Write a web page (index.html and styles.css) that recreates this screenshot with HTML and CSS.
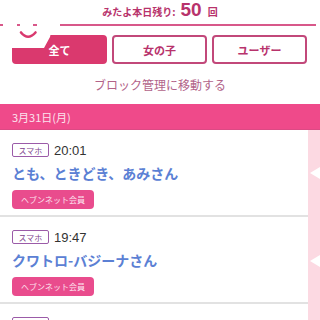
FILE: index.html
```html
<!DOCTYPE html>
<html lang="ja">
<head>
<meta charset="utf-8">
<link rel="stylesheet" href="styles.css">
</head>
<body>
<div class="page">
  <div class="header">
    <span class="small">みたよ本日残り:</span> <span class="count">50</span> <span class="small">回</span>
  </div>
  <div class="rule"></div>
  <div class="tabs">
    <div class="tab active">全て</div>
    <div class="tab">女の子</div>
    <div class="tab">ユーザー</div>
  </div>
  <div class="link">ブロック管理に移動する</div>
  <div class="datebar">3月31日(月)</div>
  <div class="list">
    <div class="cards">
      <div class="card">
        <div class="meta"><span class="badge">スマホ</span><span class="time">20:01</span></div>
        <div class="name">とも、ときどき、あみさん</div>
        <span class="tag">ヘブンネット会員</span>
      </div>
      <div class="card">
        <div class="meta"><span class="badge">スマホ</span><span class="time">19:47</span></div>
        <div class="name">クワトロ-バジーナさん</div>
        <span class="tag">ヘブンネット会員</span>
      </div>
      <div class="card">
        <div class="meta"><span class="badge"></span></div>
      </div>
    </div>
    <div class="strip">
      <span class="notch n1"></span>
      <span class="notch n2"></span>
    </div>
  </div>
  <svg class="mascot" width="62" height="40" viewBox="0 0 62 40">
    <path d="M3 0 H60 V14 H52 L50 23 L44 34 H0 V0 Z" fill="#fff"/>
    <rect x="0" y="10" width="3" height="2" fill="#d8588a"/>
    <rect x="17" y="10" width="3" height="2" fill="#d8588a"/>
    <rect x="33" y="10" width="4" height="2" fill="#d8588a"/>
    <path d="M21 18.5 Q28 27 35.5 18.5" stroke="#d93a6f" stroke-width="2.6" fill="none" stroke-linecap="round"/>
  </svg>
</div>
</body>
</html>
```

FILE: styles.css
```css
* { box-sizing: border-box; }
html, body { margin: 0; padding: 0; background: #fff; }
body { font-family: "Noto Sans CJK JP", "Noto Sans", sans-serif; width: 320px; height: 320px; overflow: hidden; }
.page { position: relative; height: 320px; overflow: hidden; }
.header {
  height: 24px;
  display: flex;
  justify-content: center;
  align-items: baseline;
  gap: 3px;
  color: #b8336c;
  font-weight: bold;
  line-height: 20px;
}
.header .small { font-size: 10px; }
.header .count { font-family: "Liberation Sans", sans-serif; font-size: 19px; margin: 0 3px 0 2px; }
.rule { height: 2px; background: #d8588a; margin-right: 4px; }
.tabs {
  display: flex;
  gap: 5px;
  padding: 0 13px 0 12px;
  margin-top: 9px;
}
.tab {
  flex: 1;
  height: 29px;
  border: 2px solid #c2487a;
  border-radius: 4px;
  display: flex;
  align-items: center;
  justify-content: center;
  font-size: 11px;
  font-weight: bold;
  color: #b8336c;
}
.tab.active { background: #da396e; border-color: #da396e; color: #fff; }
.link {
  text-align: center;
  font-size: 12px;
  color: #b26389;
  margin-top: 12px;
  line-height: 17px;
}
.datebar {
  margin-top: 11px;
  height: 26px;
  background: #ef4a8a;
  color: #fbe3ee;
  font-size: 11px;
  padding-left: 12px;
  display: flex;
  align-items: center;
  border-bottom: 1px solid #dc4a84;
}
.list { display: flex; }
.cards { flex: 1; }
.card {
  height: 87px;
  padding: 13px 12px 0;
  border-bottom: 2px solid #e2e2e2;
}
.card:last-child { border-bottom: none; }
.meta { display: flex; align-items: center; gap: 5px; height: 14px; }
.badge {
  border: 1px solid #9b5ba8;
  border-radius: 2px;
  font-size: 8px;
  color: #7c3f8d;
  width: 37px;
  height: 14px;
  display: flex;
  align-items: center;
  justify-content: center;
}
.time { font-family: "Liberation Sans", sans-serif; font-size: 13px; color: #333; }
.name {
  font-size: 14px;
  font-weight: bold;
  color: #5b80d4;
  line-height: 20px;
  margin-top: 6px;
}
.tag {
  display: inline-flex;
  align-items: center;
  justify-content: center;
  margin-top: 7px;
  width: 82px;
  height: 19px;
  background: #e94c8d;
  color: #fde4ef;
  border-radius: 4px;
  font-size: 8px;
}
.strip { width: 12px; background: #fcd9e2; position: relative; }
.notch {
  position: absolute;
  right: 0;
  width: 0; height: 0;
  border-top: 6px solid transparent;
  border-bottom: 6px solid transparent;
  border-right: 10px solid #fff;
}
.n1 { top: 37px; }
.n2 { top: 125px; }
.mascot { position: absolute; left: 0; top: 14px; }
```
